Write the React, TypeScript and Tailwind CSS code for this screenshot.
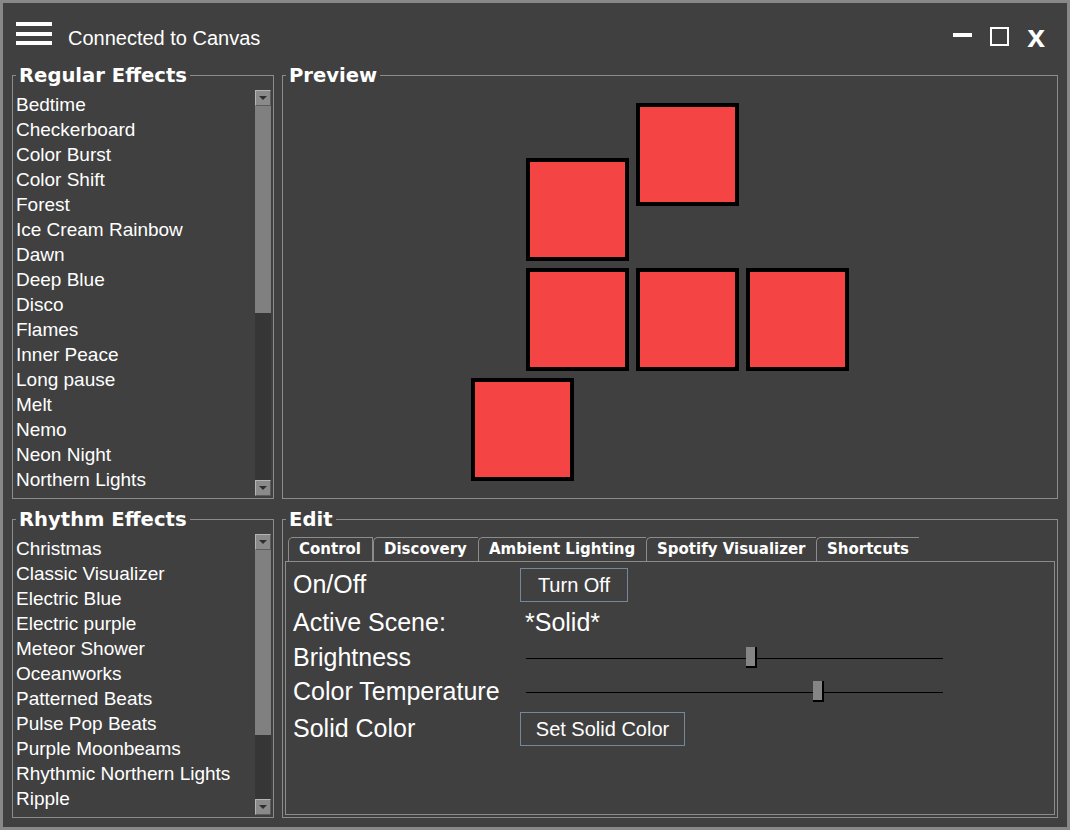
import React from "react";

const regular = [
  "Bedtime",
  "Checkerboard",
  "Color Burst",
  "Color Shift",
  "Forest",
  "Ice Cream Rainbow",
  "Dawn",
  "Deep Blue",
  "Disco",
  "Flames",
  "Inner Peace",
  "Long pause",
  "Melt",
  "Nemo",
  "Neon Night",
  "Northern Lights",
];

const rhythm = [
  "Christmas",
  "Classic Visualizer",
  "Electric Blue",
  "Electric purple",
  "Meteor Shower",
  "Oceanworks",
  "Patterned Beats",
  "Pulse Pop Beats",
  "Purple Moonbeams",
  "Rhythmic Northern Lights",
  "Ripple",
  "Snowfall",
];

const squares = [
  { x: 353, y: 27 },
  { x: 243, y: 82 },
  { x: 243, y: 192 },
  { x: 353, y: 192 },
  { x: 463, y: 192 },
  { x: 188, y: 302 },
];

function GroupBox({
  title,
  className,
  children,
}: {
  title: string;
  className?: string;
  children?: React.ReactNode;
}) {
  return (
    <div className={"relative border border-[#8c8c8c] " + (className ?? "")}>
      <span className="absolute -top-[12px] left-[3px] px-[3px] bg-[#404040] text-white font-['DejaVu_Sans',sans-serif] font-bold text-[19.6px] leading-[24px] whitespace-nowrap">
        {title}
      </span>
      {children}
    </div>
  );
}

function ScrollButton() {
  return (
    <div className="h-[16px] w-[16px] bg-[#8a8a8a] border-t border-l border-[#b4b4b4] border-r border-b border-r-[#5c5c5c] border-b-[#5c5c5c] flex items-center justify-center">
      <div className="w-0 h-0 border-l-[4px] border-r-[4px] border-t-[4px] border-l-transparent border-r-transparent border-t-[#2e2e2e]" />
    </div>
  );
}

function ScrollBar({ thumb }: { thumb: number }) {
  return (
    <div className="w-[16px] flex flex-col shrink-0">
      <ScrollButton />
      <div className="bg-[#808080] w-[16px]" style={{ height: thumb }} />
      <div className="flex-1 bg-[#363636]" />
      <ScrollButton />
    </div>
  );
}

function EffectList({ items, thumb }: { items: string[]; thumb: number }) {
  return (
    <div className="flex h-full pt-[14px] pb-[2px] pl-[3px] pr-[2px]">
      <div className="flex-1 overflow-hidden pt-[2px] font-['Liberation_Sans',Arial,sans-serif] text-[19px] leading-[25px] text-white">
        {items.map((t) => (
          <div key={t} className="h-[25px] whitespace-nowrap">
            {t}
          </div>
        ))}
      </div>
      <ScrollBar thumb={thumb} />
    </div>
  );
}

function Slider({ pos }: { pos: number }) {
  return (
    <div className="relative ml-[6px] w-[417px] h-[22px] flex items-center">
      <div className="w-full h-px bg-black" />
      <div
        className="absolute top-[0px] w-[11px] h-[21px] bg-[#858585] border-r-2 border-b-2 border-black"
        style={{ left: pos }}
      />
    </div>
  );
}

const tabs = [
  { label: "Control", w: 85, active: true },
  { label: "Discovery", w: 105 },
  { label: "Ambient Lighting", w: 168 },
  { label: "Spotify Visualizer", w: 170 },
  { label: "Shortcuts", w: 103 },
];

export default function App() {
  return (
    <div className="w-[1070px] h-[830px] bg-[#404040] border-[3px] border-[#888888] flex flex-col text-white font-['Liberation_Sans',Arial,sans-serif] overflow-hidden">
      {/* Header */}
      <div className="h-[60px] flex items-start pt-[19px] pl-[13px] pr-[22px] shrink-0">
        <div className="flex flex-col w-[36px]">
          <div className="h-[4px] bg-white" />
          <div className="h-[4px] bg-white mt-[6px]" />
          <div className="h-[4px] bg-white mt-[5px]" />
        </div>
        <div className="ml-[16px] mt-[5px] text-[20px] leading-[23px] whitespace-nowrap">
          Connected to Canvas
        </div>
        <div className="ml-auto mt-[11px] w-[19px] h-[4px] bg-white" />
        <div className="ml-[18px] mt-[5px] w-[19px] h-[19px] border-2 border-white" />
        <div className="ml-[18px] -mt-[2px] font-['Liberation_Sans',Arial,sans-serif] font-bold text-[32px] leading-[32px]">
          x
        </div>
      </div>

      {/* Main */}
      <div className="grid grid-cols-[262px_776px] grid-rows-[424px_299px] gap-x-[8px] gap-y-[20px] pt-[12px] pl-[9px] pr-[9px] pb-[9px]">
        <GroupBox title="Regular Effects">
          <EffectList items={regular} thumb={207} />
        </GroupBox>

        <GroupBox title="Preview">
          <div className="relative w-full h-full">
            {squares.map((s, i) => (
              <div
                key={i}
                className="absolute w-[103px] h-[103px] bg-[#f44444] border-[4px] border-black"
                style={{ left: s.x, top: s.y }}
              />
            ))}
          </div>
        </GroupBox>

        <GroupBox title="Rhythm Effects">
          <EffectList items={rhythm} thumb={185} />
        </GroupBox>

        <GroupBox title="Edit">
          <div className="flex flex-col h-full pt-[17px] pl-[2px] pr-[2px] pb-[2px]">
            <div className="flex h-[24px] ml-[3px] shrink-0">
              {tabs.map((t) => (
                <div
                  key={t.label}
                  className={
                    "h-[24px] border-t border-l border-[#8c8c8c] rounded-tl-[5px] pl-[10px] font-['DejaVu_Sans',sans-serif] font-bold text-[15px] leading-[23px] whitespace-nowrap " +
                    (t.active ? "border-r" : "")
                  }
                  style={{ width: t.w }}
                >
                  {t.label}
                </div>
              ))}
            </div>
            <div className="flex-1 border border-[#8c8c8c] pl-[7px] pt-[6px] flex flex-col text-[25px]">
              <div className="flex items-center h-[34px]">
                <div className="w-[227px] whitespace-nowrap">On/Off</div>
                <div className="w-[108px] h-[34px] border border-[#74889c] flex items-center justify-center text-[20px]">
                  Turn Off
                </div>
              </div>
              <div className="flex items-center h-[42px]">
                <div className="w-[227px] whitespace-nowrap">Active Scene:</div>
                <div className="pl-[5px]">*Solid*</div>
              </div>
              <div className="flex items-center h-[28px]">
                <div className="w-[227px] whitespace-nowrap">Brightness</div>
                <Slider pos={220} />
              </div>
              <div className="flex items-center h-[40px]">
                <div className="w-[227px] whitespace-nowrap">Color Temperature</div>
                <Slider pos={287} />
              </div>
              <div className="flex items-center h-[34px]">
                <div className="w-[227px] whitespace-nowrap">Solid Color</div>
                <div className="w-[165px] h-[34px] border border-[#74889c] flex items-center justify-center text-[20px]">
                  Set Solid Color
                </div>
              </div>
            </div>
          </div>
        </GroupBox>
      </div>
    </div>
  );
}
